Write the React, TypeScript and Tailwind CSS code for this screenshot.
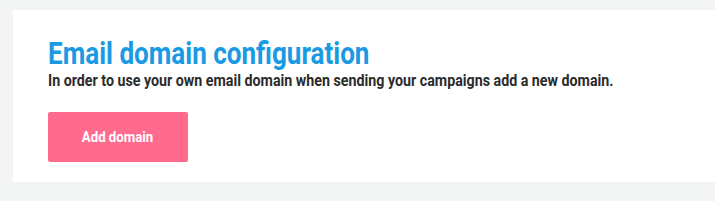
import React from 'react';

export default function App() {
  return (
    <div className="min-h-[201px] w-[715px] bg-[#f3f4f4] pt-[10px] pl-[13px]" style={{ fontFamily: 'Roboto, "Liberation Sans", sans-serif' }}>
      <div className="h-[172px] bg-white pl-[35px] pt-[27px]">
        {/* Roboto Condensed isn't installed, so squeeze Roboto horizontally */}
        <h1 className="origin-left scale-x-[0.84] whitespace-nowrap text-[31px] font-bold leading-[34px] text-[#1b9ae4]">
          Email domain configuration
        </h1>
        <p className="origin-left scale-x-[0.89] whitespace-nowrap text-[16px] font-bold leading-[20px] text-[#2b2b2b]">
          In order to use your own email domain when sending your campaigns add a new domain.
        </p>
        <button
          type="button"
          className="mt-[21px] flex h-[50px] w-[140px] items-center justify-center rounded-[2px] bg-[#ff6b8e] text-white"
        >
          <span className="scale-x-[0.88] text-[15px] font-bold">Add domain</span>
        </button>
      </div>
    </div>
  );
}
